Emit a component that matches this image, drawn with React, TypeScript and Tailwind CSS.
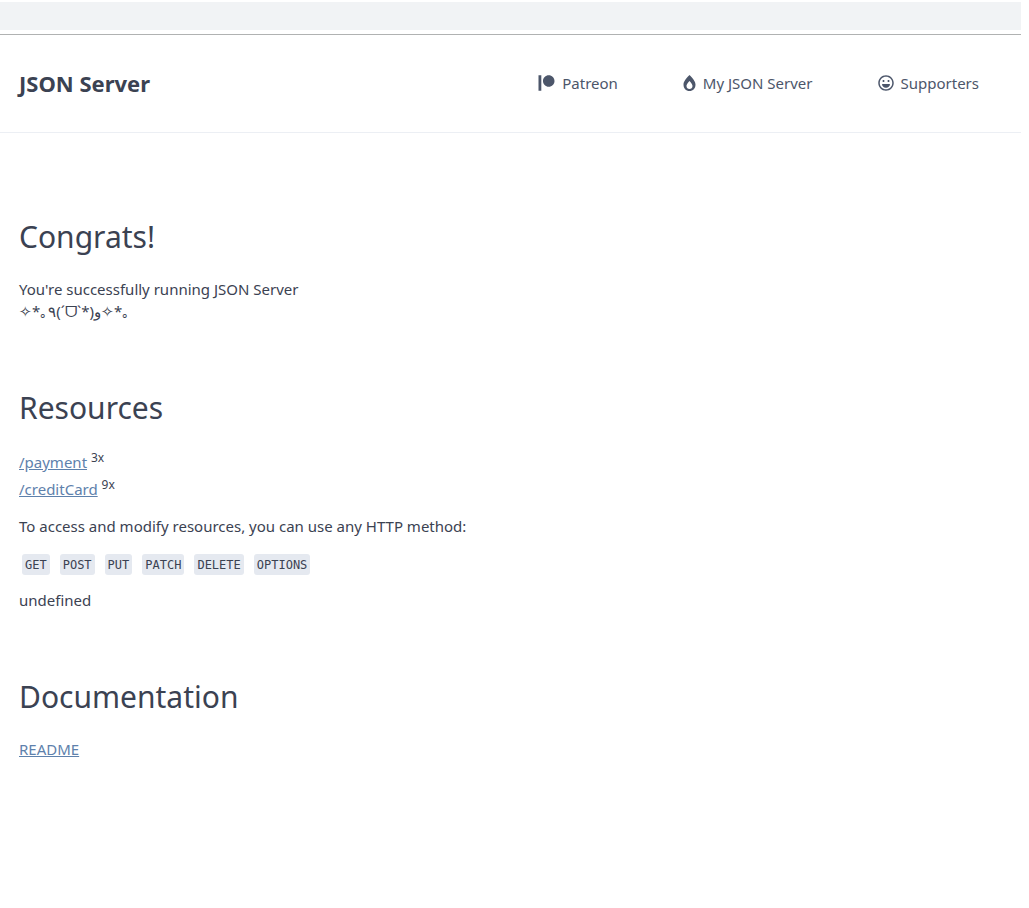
import { FaBurn, FaPatreon, FaRegLaugh } from "react-icons/fa";

const links = [
  { label: "Patreon", icon: <FaPatreon className="h-4 w-[17px]" /> },
  { label: "My JSON Server", icon: <FaBurn className="h-4 w-[13px]" /> },
  { label: "Supporters", icon: <FaRegLaugh className="size-4" /> },
];

const resources = [
  { name: "/payment", count: "3x" },
  { name: "/creditCard", count: "9x" },
];

const methods = ["GET", "POST", "PUT", "PATCH", "DELETE", "OPTIONS"];

function Heading({ children }: { children: string }) {
  return <h1 className="text-[30px] leading-10">{children}</h1>;
}

export default function App() {
  return (
    <div className="min-h-screen bg-white pr-2 font-['Noto_Sans','Open_Sans',sans-serif] text-[15px] leading-[22px] text-[#3b4252]">
      <div className="border-b border-[#b0b2b2] pt-0.5 pb-1">
        <div className="h-7 bg-[#f1f3f5]" />
      </div>
      <header className="border-b border-[#eceff4]">
        <nav className="flex items-center justify-between pt-8 pb-[33px] pr-[42px] pl-[19px] leading-8">
          <strong className="text-[22px] leading-[30px] font-bold">JSON Server</strong>
          <ul className="flex gap-[65px] text-[#4c566a]">
            {links.map((link) => (
              <li key={link.label}>
                <a href="#" className="flex items-center gap-[7px]">
                  {link.icon}
                  {link.label}
                </a>
              </li>
            ))}
          </ul>
        </nav>
      </header>
      <main className="px-[19px] pt-[84px]">
        <section>
          <Heading>Congrats!</Heading>
          <p className="mt-[21px]">
            You're successfully running JSON Server
            <br />
            ✧*｡٩(ˊᗜˋ*)و✧*｡
          </p>
        </section>
        <section className="mt-[66px]">
          <Heading>Resources</Heading>
          <ul className="mt-[21px] leading-[27px]">
            {resources.map((resource) => (
              <li key={resource.name}>
                <a href="#" className="text-[#5e81ac] underline">
                  {resource.name}
                </a>{" "}
                <sup className="text-xs">{resource.count}</sup>
              </li>
            ))}
          </ul>
          <p className="mt-3">
            To access and modify resources, you can use any HTTP method:
          </p>
          <p className="mt-[17px] flex gap-2.5 px-[3px]">
            {methods.map((method) => (
              <code
                key={method}
                className="rounded-[3px] bg-[#e5e9f0] px-[3px] pt-px font-['DejaVu_Sans_Mono',monospace] text-[12px] leading-5"
              >
                {method}
              </code>
            ))}
          </p>
          <p className="mt-[14px]">undefined</p>
        </section>
        <section className="mt-[66px]">
          <Heading>Documentation</Heading>
          <p className="mt-[21px]">
            <a href="#" className="text-[#5e81ac] underline">
              README
            </a>
          </p>
        </section>
      </main>
    </div>
  );
}
